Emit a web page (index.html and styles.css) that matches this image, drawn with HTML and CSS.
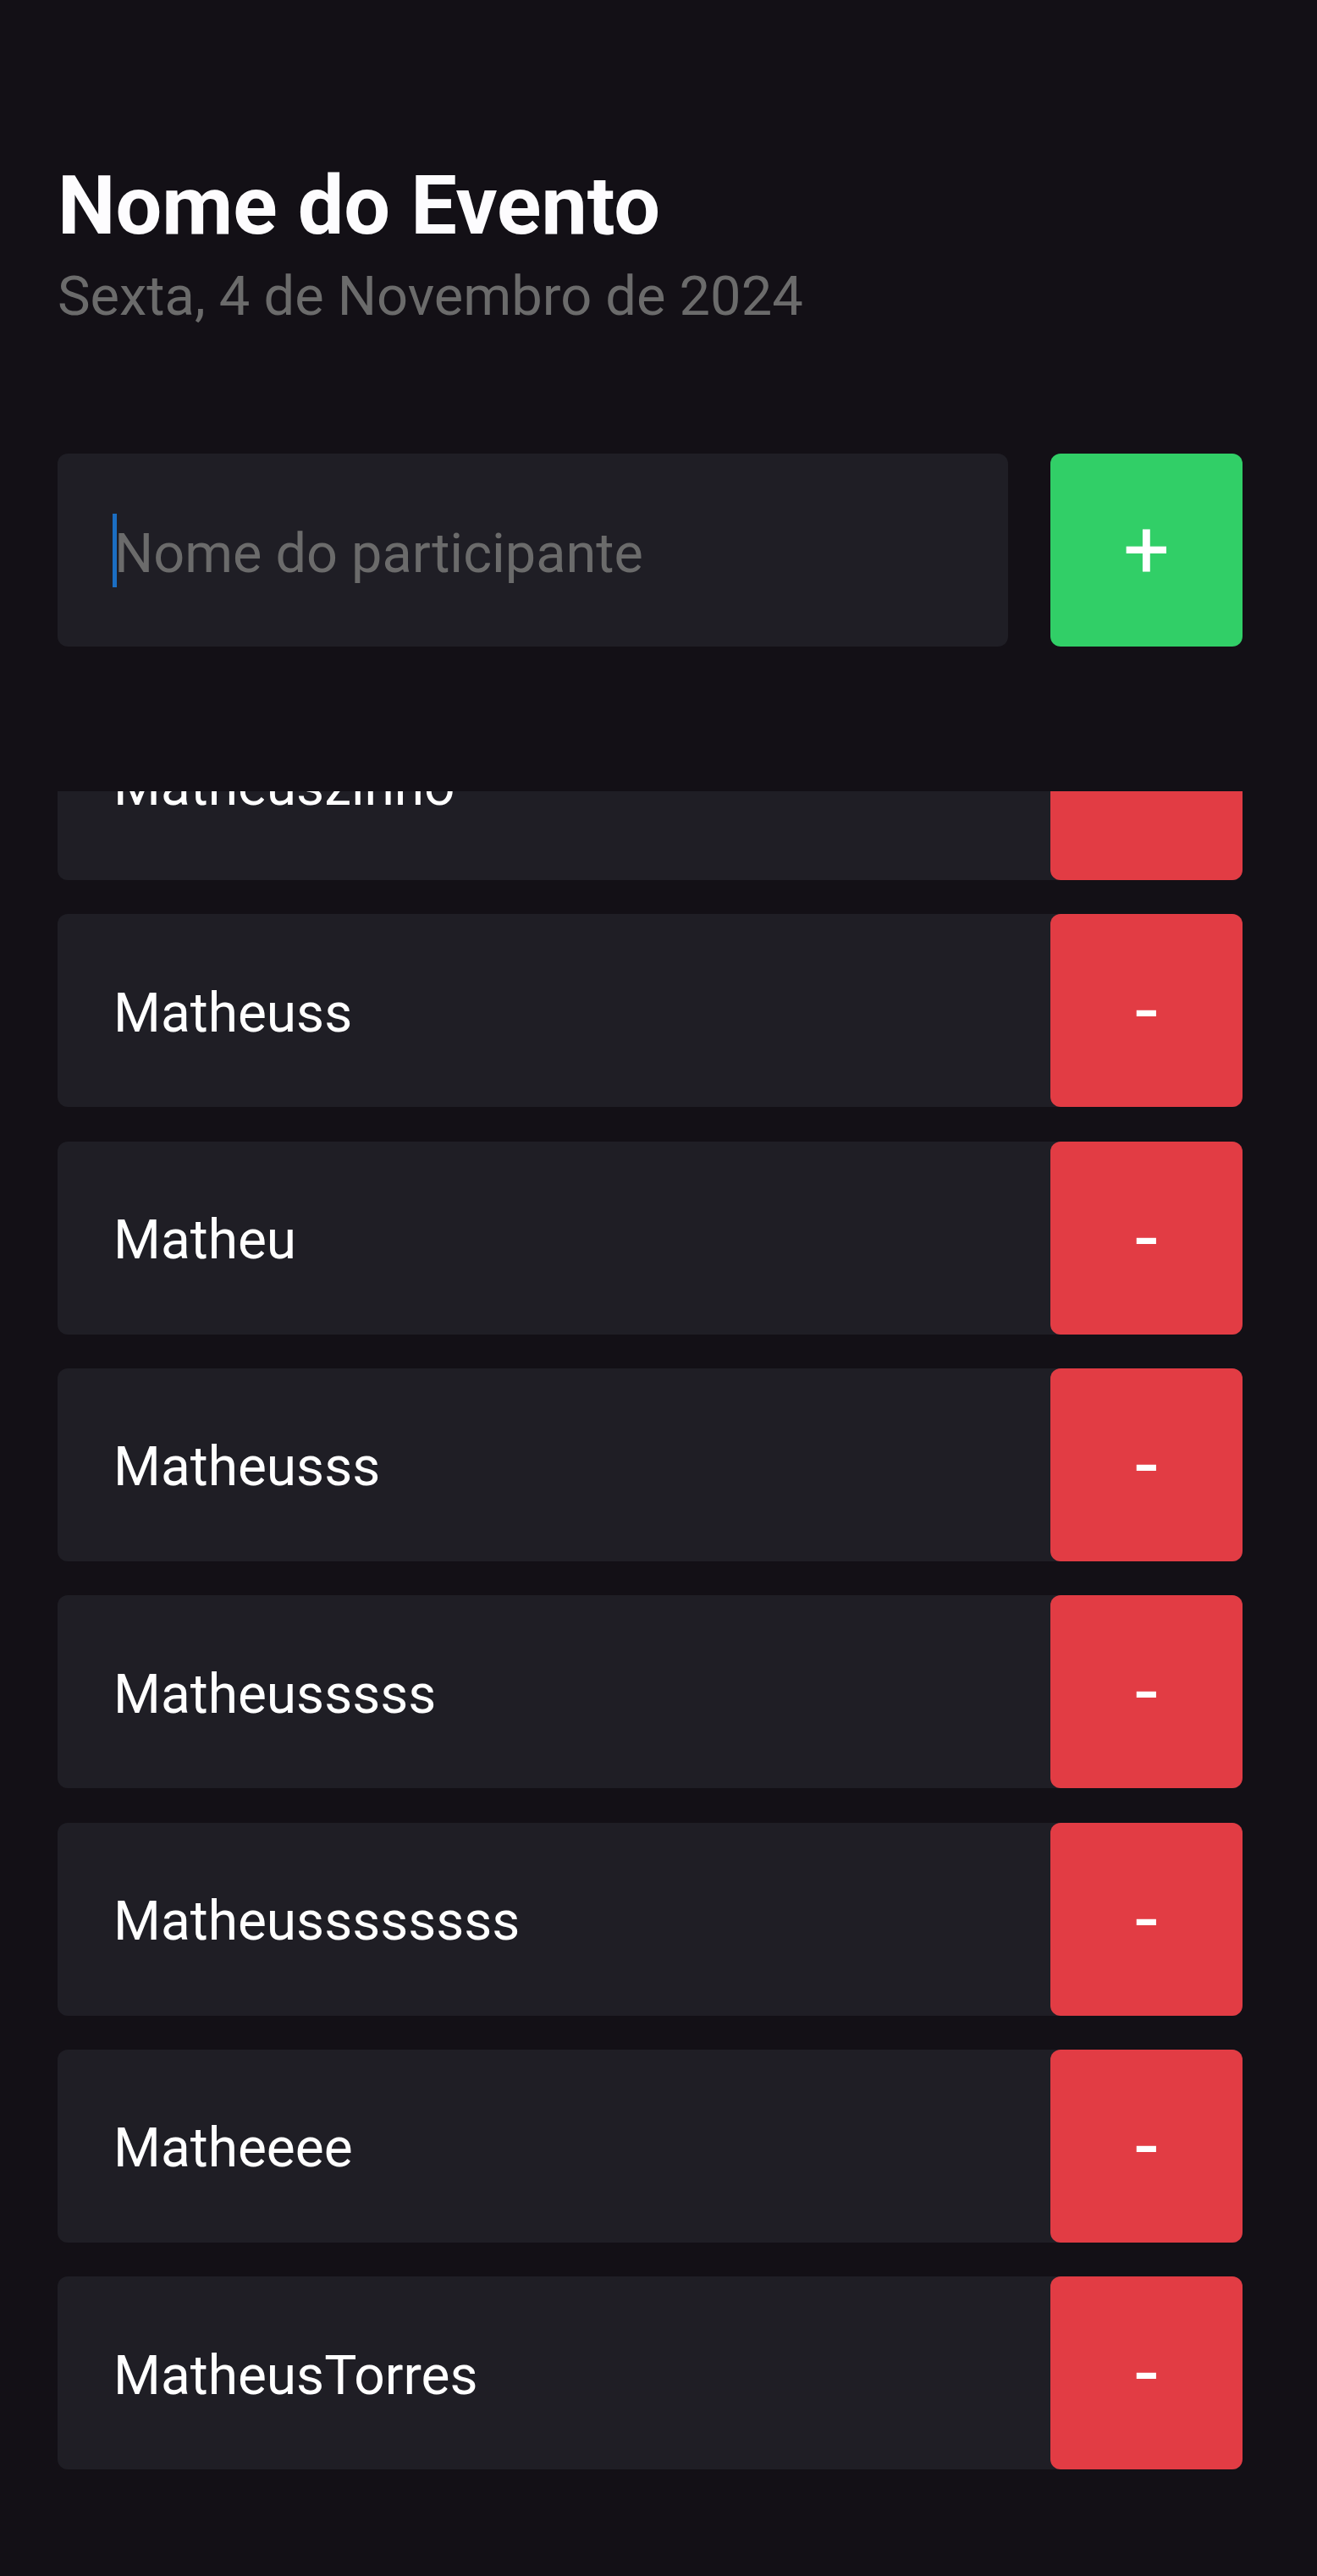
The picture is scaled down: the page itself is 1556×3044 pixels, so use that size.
FILE: index.html
```html
<!DOCTYPE html>
<html lang="pt-BR">
<head>
<meta charset="utf-8">
<title>Nome do Evento</title>
<link rel="stylesheet" href="styles.css">
</head>
<body>
<div class="app">
  <header class="header">
    <h1 class="title">Nome do Evento</h1>
    <p class="date">Sexta, 4 de Novembro de 2024</p>
  </header>

  <div class="form">
    <div class="input">
      <span class="caret"></span>
      <span class="placeholder">Nome do participante</span>
    </div>
    <button class="btn btn-add" type="button">+</button>
  </div>

  <div class="list-viewport">
    <ul class="list">
      <li class="item"><span class="name">Matheuszinho</span><button class="btn btn-remove" type="button">-</button></li>
      <li class="item"><span class="name">Matheuss</span><button class="btn btn-remove" type="button">-</button></li>
      <li class="item"><span class="name">Matheu</span><button class="btn btn-remove" type="button">-</button></li>
      <li class="item"><span class="name">Matheusss</span><button class="btn btn-remove" type="button">-</button></li>
      <li class="item"><span class="name">Matheusssss</span><button class="btn btn-remove" type="button">-</button></li>
      <li class="item"><span class="name">Matheussssssss</span><button class="btn btn-remove" type="button">-</button></li>
      <li class="item"><span class="name">Matheeee</span><button class="btn btn-remove" type="button">-</button></li>
      <li class="item"><span class="name">MatheusTorres</span><button class="btn btn-remove" type="button">-</button></li>
    </ul>
  </div>
</div>
</body>
</html>
```

FILE: styles.css
```css
* {
  box-sizing: border-box;
}

html, body {
  margin: 0;
  padding: 0;
  background: #131016;
}

body {
  font-family: Roboto, "Liberation Sans", sans-serif;
  color: #fdfcfe;
  height: 3044px;
  overflow: hidden;
}

.app {
  padding: 0 88px 0 68px;
}

.header {
  padding-top: 187px;
}

.title {
  margin: 0;
  font-size: 97px;
  line-height: 112px;
  font-weight: 700;
  color: #fdfcfe;
}

.date {
  margin: 13px 0 0;
  font-size: 65px;
  line-height: 76px;
  color: #6b6b6b;
}

.form {
  display: flex;
  gap: 50px;
  height: 228px;
  margin-top: 148px;
}

.input {
  flex: 1;
  display: flex;
  align-items: center;
  background: #1f1e25;
  border-radius: 12px;
  padding-left: 65px;
}

.caret {
  display: block;
  width: 5px;
  height: 87px;
  background: #1b6ec2;
}

.placeholder {
  margin-left: -3px;
  padding-top: 8px;
  font-size: 64.8px;
  color: #6b6b6b;
}

.btn {
  width: 227px;
  height: 100%;
  border: 0;
  border-radius: 12px;
  padding: 0;
  font-family: Roboto, "Liberation Sans", sans-serif;
  font-size: 97px;
  color: #ffffff;
  display: flex;
  align-items: center;
  justify-content: center;
  flex-shrink: 0;
}

.btn-add {
  background: #31cf67;
}

.btn-remove {
  background: #e23c44;
}

.list-viewport {
  margin-top: 171px;
  height: 2109px;
  overflow: hidden;
}

.list {
  list-style: none;
  margin: -123px 0 0;
  padding: 0;
  display: flex;
  flex-direction: column;
  gap: 40.33px;
}

.item {
  display: flex;
  align-items: stretch;
  height: 228px;
  background: #1f1e25;
  border-radius: 12px;
}

.name {
  flex: 1;
  display: flex;
  align-items: center;
  padding-left: 66px;
  padding-top: 6px;
  font-size: 64px;
  color: #ffffff;
}
```
